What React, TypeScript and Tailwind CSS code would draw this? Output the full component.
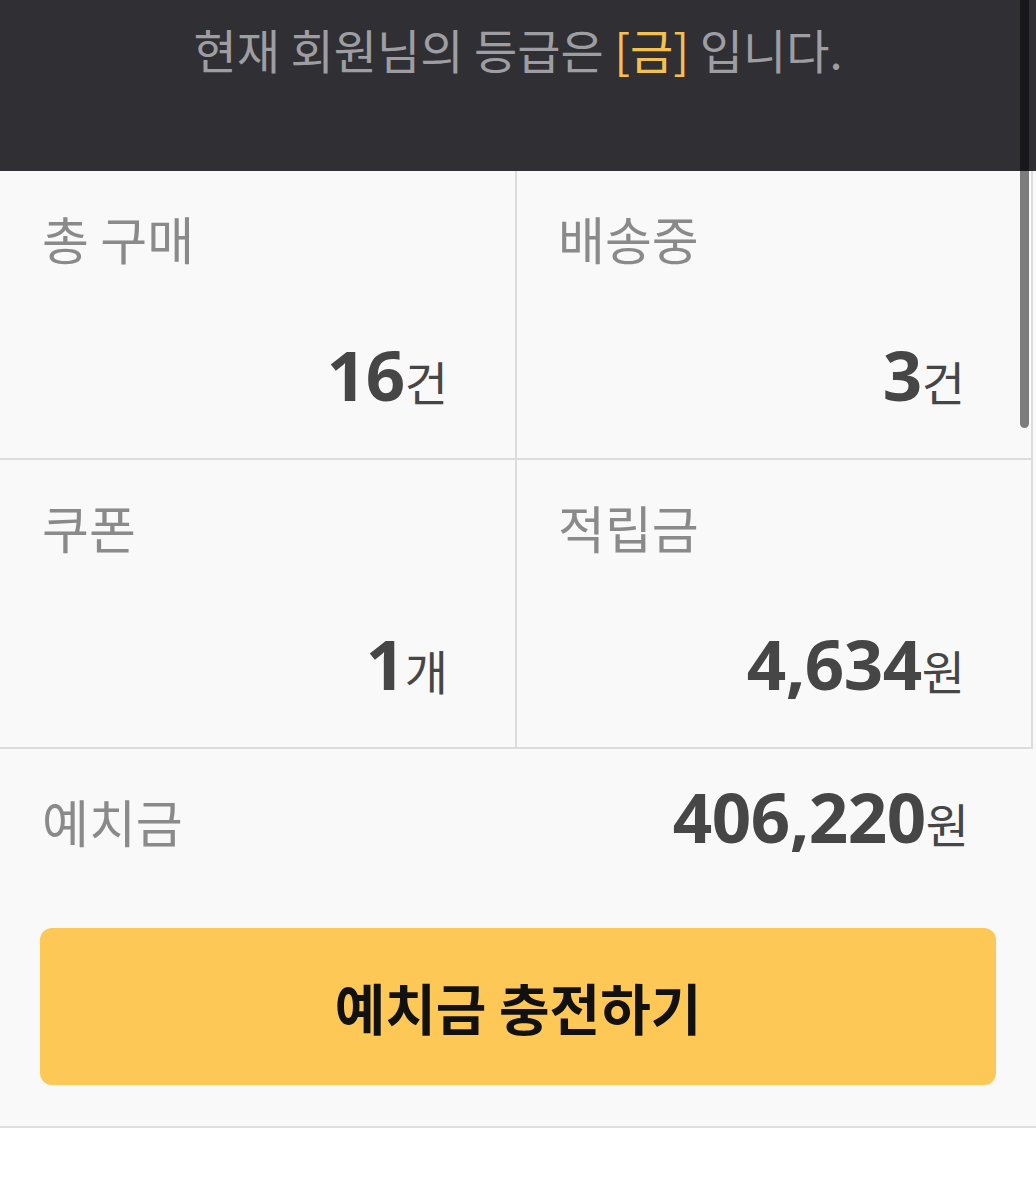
import React from 'react';

const KR = { fontFamily: '"Noto Sans CJK KR", "Noto Sans", sans-serif' };
const NUM = { fontFamily: '"Noto Sans", "Noto Sans CJK KR", sans-serif' };

interface Stat { label: string; value: string; unit: string; }

const STATS: Stat[] = [
  { label: '총 구매', value: '16', unit: '건' },
  { label: '배송중', value: '3', unit: '건' },
  { label: '쿠폰', value: '1', unit: '개' },
  { label: '적립금', value: '4,634', unit: '원' },
];

function Value({ value, unit }: { value: string; unit: string }) {
  return (
    <div className="flex items-baseline justify-end leading-none text-[#464646]">
      <span className="text-[69px] font-bold leading-none tracking-[-0.5px]" style={NUM}>{value}</span>
      <span className="text-[47px] leading-none" style={KR}>{unit}</span>
    </div>
  );
}

export default function App() {
  return (
    <div className="relative w-[1036px] min-h-[1200px] bg-white" style={KR}>
      {/* grade banner */}
      <div className="h-[171px] bg-[#302f34] pt-[16px] text-center">
        <p className="text-[47px] leading-[66px] text-[#9e9ea2]" style={KR}>
          현재 회원님의 등급은 <span className="text-[#f5c14e]">[금]</span> 입니다.
        </p>
      </div>

      <div className="bg-[#f9f9f9]">
        {/* stats grid */}
        <div className="grid w-[1033px] grid-cols-[517px_516px]">
          {STATS.map((s, i) => (
            <div
              key={s.label}
              className={`h-[289px] border-b-2 border-r-2 border-[#dcdcdc] pt-[35px] ${i % 2 === 0 ? 'pl-[42px] pr-[67px]' : 'pl-[41px] pr-[66px]'}`}
            >
              <div className="text-[51px] leading-[64px] text-[#8a8a8a]" style={KR}>{s.label}</div>
              <div className="mt-[70px]">
                <Value value={s.value} unit={s.unit} />
              </div>
            </div>
          ))}
        </div>

        {/* deposit */}
        <div className="flex items-baseline justify-between pl-[42px] pr-[67px] pt-[33px]">
          <span className="text-[51px] leading-none text-[#8a8a8a]" style={KR}>예치금</span>
          <Value value="406,220" unit="원" />
        </div>

        <div className="px-[40px] pt-[77px] pb-[41px]">
          <button className="flex h-[157px] w-full items-center justify-center rounded-[12px] bg-[#fec857] text-[55px] font-bold text-[#111]" style={KR}>
            예치금 충전하기
          </button>
        </div>
      </div>
      <div className="h-[2px] bg-[#dedede]" />

      {/* scrollbar thumb */}
      <div className="absolute left-[1020px] top-0 h-[428px] w-[9px] rounded-b-full bg-black/50" />
    </div>
  );
}
